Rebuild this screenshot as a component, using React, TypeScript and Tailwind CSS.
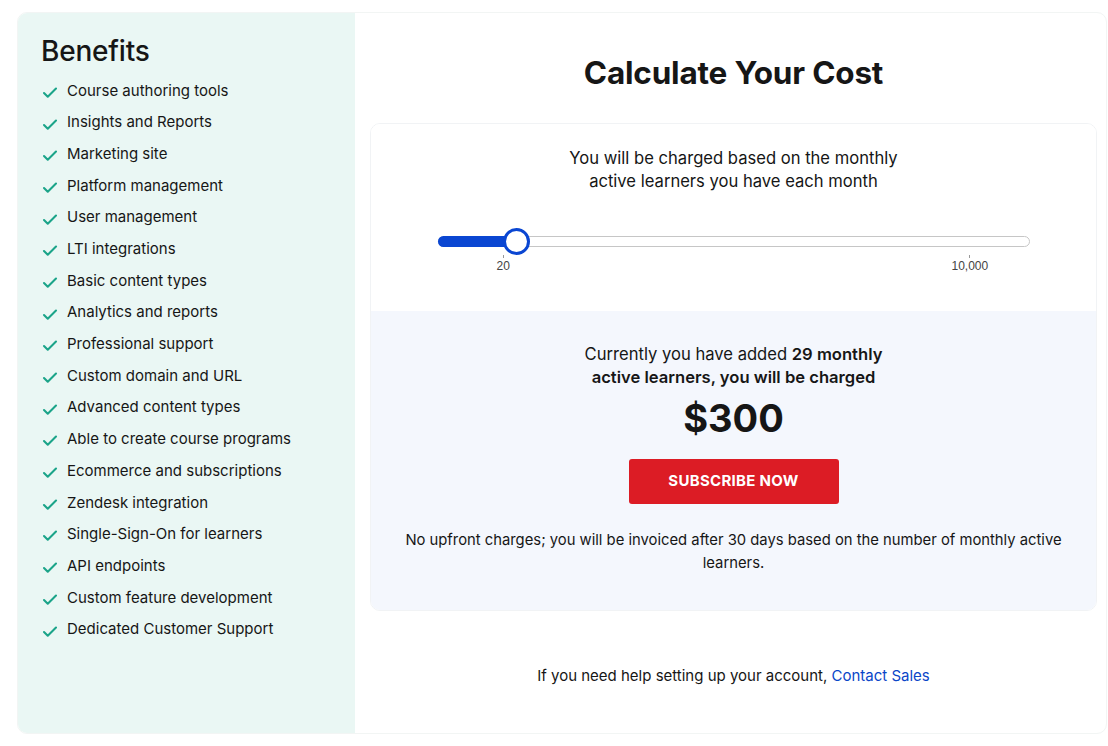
import { Check } from 'lucide-react'

const benefits = [
  'Course authoring tools',
  'Insights and Reports',
  'Marketing site',
  'Platform management',
  'User management',
  'LTI integrations',
  'Basic content types',
  'Analytics and reports',
  'Professional support',
  'Custom domain and URL',
  'Advanced content types',
  'Able to create course programs',
  'Ecommerce and subscriptions',
  'Zendesk integration',
  'Single-Sign-On for learners',
  'API endpoints',
  'Custom feature development',
  'Dedicated Customer Support',
]

export default function App() {
  return (
    <div className="bg-white min-h-screen pl-[17px] pt-[12px] font-['Inter',sans-serif] text-[#161616]">
      <div className="flex w-[1090px] h-[722px] rounded-[10px] border border-[#f2f5f4] overflow-hidden">
        <div className="w-[337px] shrink-0 bg-[#eaf7f4] pl-[23px] pt-[20px]">
          <h2 className="text-[28px] leading-[36px] font-medium tracking-[-0.2px]">Benefits</h2>
          <ul className="mt-[6px]">
            {benefits.map((b) => (
              <li key={b} className="flex items-center h-[31.7px] text-[15px]">
                <Check className="w-[18px] h-[18px] text-[#1ba489] mr-[8px] mt-[4px]" strokeWidth={2.8} />
                <span>{b}</span>
              </li>
            ))}
          </ul>
        </div>

        <div className="flex-1 flex flex-col pl-[15px] pr-[9px]">
          <h1 className="text-center text-[31.5px] font-bold leading-[40px] mt-[40px] tracking-[-0.2px]">Calculate Your Cost</h1>

          <div className="mt-[30px] rounded-[10px] border border-[#f1f3f5] overflow-hidden">
            <div className="bg-white h-[187px] flex flex-col items-center pt-[23px]">
              <p className="text-center text-[16.6px] leading-[23px]">
                You will be charged based on the monthly
                <br />
                active learners you have each month
              </p>
              <div className="w-[592px] mt-[43px] relative">
                <div className="h-[11px] rounded-full border border-[#c6c6c6] bg-white relative">
                  <div className="absolute left-[-1px] top-[-1px] h-[11px] w-[80px] rounded-l-full bg-[#0a46d2]" />
                </div>
                <div className="absolute left-[65px] top-[-8px] w-[27px] h-[27px] rounded-full bg-white border-[3px] border-[#0a46d2]" />
                <div className="relative h-[28px] text-[12px] text-[#444] font-['Liberation_Sans',sans-serif]">
                  <div className="absolute left-[65px] top-[8px] w-px h-[3px] bg-[#999]" />
                  <div className="absolute left-[531px] top-[8px] w-px h-[3px] bg-[#999]" />
                  <span className="absolute left-[59px] top-[10px]">20</span>
                  <span className="absolute left-[514px] top-[10px]">10,000</span>
                </div>
              </div>
            </div>
            <div className="bg-[#f4f7fd] h-[299px] flex flex-col items-center pt-[32px]">
              <p className="text-center text-[16.6px] leading-[23px]">
                Currently you have added <b className="font-semibold">29 monthly</b>
                <br />
                <b className="font-semibold">active learners, you will be charged</b>
              </p>
              <div className="text-[38px] font-bold leading-[44px] mt-[7px]">$300</div>
              <button className="mt-[19px] w-[210px] h-[45px] rounded-[3px] bg-[#dc1c25] text-white text-[15px] font-bold tracking-[0.3px]">
                SUBSCRIBE NOW
              </button>
              <p className="mt-[25px] text-center text-[14.8px] leading-[23px] w-[670px]">
                No upfront charges; you will be invoiced after 30 days based on the number of monthly active learners.
              </p>
            </div>
          </div>

          <p className="text-center text-[15px] mt-[54px]">
            If you need help setting up your account, <a className="text-[#0a46c8]">Contact Sales</a>
          </p>
        </div>
      </div>
    </div>
  )
}
